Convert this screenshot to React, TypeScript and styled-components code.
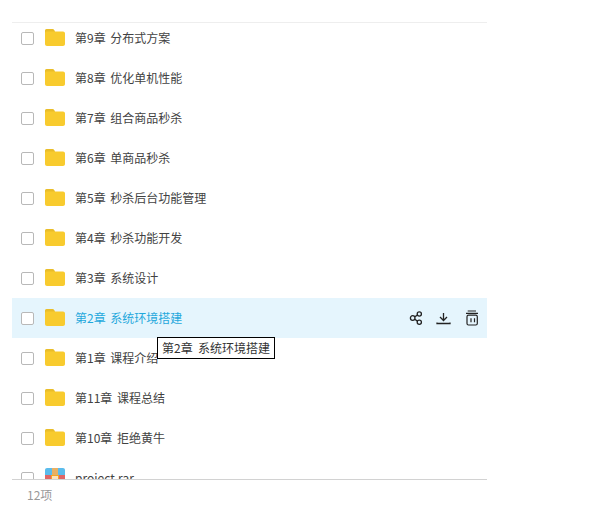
import styled, { createGlobalStyle } from 'styled-components';

const GlobalStyle = createGlobalStyle`
  html, body {
    margin: 0;
    padding: 0;
    background: #fff;
  }
  body {
    font-family: 'Microsoft YaHei', 'Noto Sans CJK SC', 'Liberation Sans', sans-serif;
  }
`;

const Page = styled.div`
  position: relative;
  width: 603px;
  height: 506px;
  overflow: hidden;
  padding: 22px 116px 0 12px;
  box-sizing: border-box;
  display: flex;
  flex-direction: column;
`;

const List = styled.div`
  height: 457px;
  flex: none;
  box-sizing: border-box;
  border-top: 1px solid #eeeeee;
  overflow: hidden;
`;

const Rows = styled.div`
  margin-top: -5px;
`;

const Row = styled.div<{ $active?: boolean }>`
  height: 40px;
  display: flex;
  align-items: center;
  padding: 0 9px;
  background: ${(props) => (props.$active ? '#e5f5fd' : 'transparent')};
`;

const Check = styled.span`
  width: 13px;
  height: 13px;
  flex: none;
  box-sizing: border-box;
  border: 1px solid #b8b8b8;
  border-radius: 2px;
  background: #fff;
  margin-right: 11px;
`;

const IconBox = styled.span`
  width: 20px;
  height: 20px;
  flex: none;
  margin-right: 10px;
  display: flex;
  svg {
    display: block;
  }
`;

const Name = styled.span<{ $active?: boolean }>`
  flex: 1;
  font-size: 12px;
  line-height: 20px;
  white-space: pre;
  word-spacing: 2px;
  color: ${(props) => (props.$active ? '#1fa8dc' : '#424242')};
`;

const Actions = styled.div`
  display: flex;
  align-items: center;
  gap: 12px;
  margin-right: -1px;
  svg {
    display: block;
  }
`;

const Footer = styled.div`
  width: 475px;
  box-sizing: border-box;
  border-top: 1px solid #d2d2d2;
  padding: 7px 15px;
  font-size: 12px;
  line-height: 16px;
  color: #999;
`;

const Tooltip = styled.div`
  position: absolute;
  left: 157px;
  top: 337px;
  height: 22px;
  box-sizing: border-box;
  padding: 0 4px;
  border: 1px solid #000;
  background: #fff;
  color: #333;
  font-size: 12px;
  line-height: 20px;
  white-space: pre;
`;

const names = [
  '第9章 分布式方案',
  '第8章 优化单机性能',
  '第7章 组合商品秒杀',
  '第6章 单商品秒杀',
  '第5章 秒杀后台功能管理',
  '第4章 秒杀功能开发',
  '第3章 系统设计',
  '第2章 系统环境搭建',
  '第1章 课程介绍',
  '第11章 课程总结',
  '第10章 拒绝黄牛',
];

const FolderIcon = () => (
  <svg width="20" height="20" viewBox="0 0 20 20">
    <path d="M0 3C0 1.900.9 1 2 1h5.200c.7 0 1.200.3 1.600.8L10 3.500h8c1.100 0 2 .9 2 2V16c0 1.100-.9 2-2 2H2c-1.100 0-2-.9-2-2z" fill="#f8cb2e" />
    <path d="M0 3C0 1.900.9 1 2 1h5.200c.7 0 1.200.3 1.600.8L10 3.500H2C.9 3.500 0 4.100 0 5z" fill="#e9bd2a" />
  </svg>
);

const RarIcon = () => (
  <svg width="20" height="20" viewBox="0 0 20 20">
    <path d="M2 0h16c1.100 0 2 .9 2 2v5H0V2C0 .9.900 0 2 0z" fill="#5bbcec" />
    <rect y="7" width="20" height="13" fill="#e06666" />
    <rect x="7" y="0" width="6" height="20" fill="#e8b064" />
    <rect x="6.500" y="7.500" width="7" height="6" fill="#fbe3c0" stroke="#f5a623" />
  </svg>
);

const ShareIcon = () => (
  <svg width="16" height="16" viewBox="0 0 16 16" fill="none" stroke="#222" strokeWidth="1.300">
    <circle cx="5.700" cy="8" r="2.300" />
    <circle cx="12.300" cy="4" r="2.100" />
    <circle cx="12.300" cy="12.300" r="2.100" />
    <path d="M7.700 6.800l2.800-1.700M7.700 9.200l2.800 1.900" />
  </svg>
);

const DownloadIcon = () => (
  <svg width="16" height="16" viewBox="0 0 16 16" fill="none" stroke="#222" strokeWidth="1.300">
    <path d="M8.500 3v7.500M5 7l3.500 3.500L12 7M2 12.500v1h13v-1" />
  </svg>
);

const TrashIcon = () => (
  <svg width="16" height="16" viewBox="0 0 16 16" fill="none" stroke="#222" strokeWidth="1.200">
    <path d="M4.700 1h8.300M3 3.300h12" />
    <rect x="4" y="5.200" width="10.300" height="9.800" rx="1.500" />
    <path d="M8 8.300v4M11.500 8.300v4" />
  </svg>
);

function App() {
  return (
    <Page>
      <GlobalStyle />
      <List>
        <Rows>
          {names.map((name) => {
            const active = name.startsWith('第2章');
            return (
              <Row key={name} $active={active}>
                <Check />
                <IconBox>
                  <FolderIcon />
                </IconBox>
                <Name $active={active}>{name}</Name>
                {active && (
                  <Actions>
                    <ShareIcon />
                    <DownloadIcon />
                    <TrashIcon />
                  </Actions>
                )}
              </Row>
            );
          })}
          <Row>
            <Check />
            <IconBox>
              <RarIcon />
            </IconBox>
            <Name>project.rar</Name>
          </Row>
        </Rows>
      </List>
      <Footer>12项</Footer>
      <Tooltip>第2章  系统环境搭建</Tooltip>
    </Page>
  );
}

export default App;
